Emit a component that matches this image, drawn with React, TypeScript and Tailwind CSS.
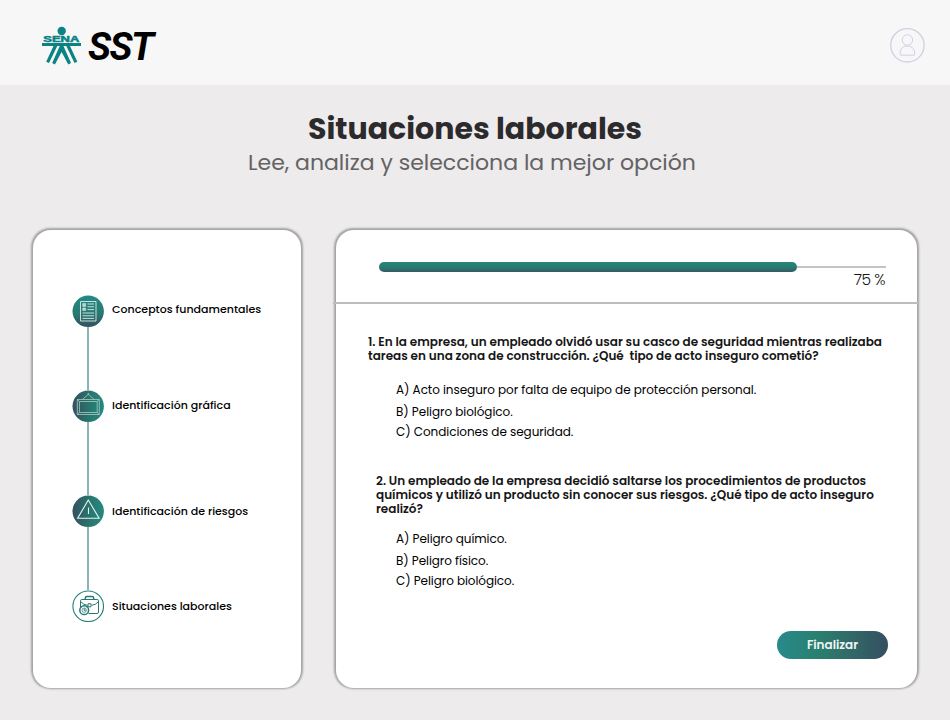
import React from "react";

const steps = [
  { label: "Conceptos fundamentales", icon: "doc", gap: "h-[63px]", shift: "mt-[-4px]" },
  { label: "Identificación gráfica", icon: "frame", gap: "h-[73px]", shift: "mt-[-2px]" },
  { label: "Identificación de riesgos", icon: "warn", gap: "h-[63px]", shift: "mt-0" },
  { label: "Situaciones laborales", icon: "case", gap: "", shift: "mt-0" },
];

function StepIcon({ kind }: { kind: string }) {
  const id = "g-" + kind;
  const vertical = kind === "doc";
  return (
    <svg viewBox="0 0 32 32" className="block size-8 shrink-0" fill="none">
      <defs>
        <linearGradient id={id} x1="0" y1="0" x2={vertical ? "0" : "1"} y2={vertical ? "1" : "0"}>
          <stop offset="0" stopColor={vertical ? "#248987" : "#34505f"} />
          <stop offset=".6" stopColor="#27796f" />
          <stop offset="1" stopColor={vertical ? "#344f61" : "#268783"} />
        </linearGradient>
      </defs>
      {kind === "case" ? (
        <circle cx="16.2" cy="16.3" r="15.3" fill="#fff" stroke="#287d7d" strokeWidth="1.1" />
      ) : (
        <circle cx="16.2" cy="16.3" r="15.7" fill={`url(#${id})`} />
      )}
      {kind === "doc" && (
        <g stroke="#dcebea" strokeWidth=".9">
          <path d="M8.5 6.5h15.5v19.5H8.5z" />
          <path d="M10.7 8.5h3v3h-3zM10.7 13h3v2.5h-3z" fill="#b7d5d3" strokeWidth=".5" />
          <path d="M15.5 9h6.5M15.5 11.8h6.5M15.5 14.6h6.5M10.5 18h11.5M10.5 20.8h11.5M10.5 23.4h11.5" />
        </g>
      )}
      {kind === "frame" && (
        <g stroke="#a8cac7" strokeWidth=".8">
          <path d="M5.3 9.5h22v15h-22zM7.4 11.5h17.8v11H7.4zM5.3 9.5l2.1 2M27.3 9.5l-2.1 2M5.3 24.5l2.1-2M27.3 24.5l-2.1-2M10.5 9.5l5.8-5.2 5.8 5.2" />
          <circle cx="16.3" cy="4" r=".5" />
        </g>
      )}
      {kind === "warn" && (
        <g stroke="#e9f3f3" strokeWidth="1.1">
          <path d="M16.3 5L5.6 23.3h21.5z" />
          <path d="M16.5 12.5v6.5" />
        </g>
      )}
      {kind === "case" && (
        <g stroke="#287875" strokeWidth="1">
          <path d="M8.5 17v-6.2q0-1.3 1.3-1.3h15.4q1.3 0 1.3 1.3v11.2q0 1.5-1.5 1.5H16.5" />
          <path d="M13.3 9.2V8.2q0-1.7 1.7-1.7h5q1.7 0 1.7 1.7v1" strokeWidth="1.5" />
          <path d="M8.5 11.5q3 3.5 7 3.8M19.5 15.3q4.5-.3 7-3.8M16 13.8h3v3h-3z" />
          <circle cx="12.2" cy="20.2" r="4.4" fill="#fff" strokeWidth="1.5" />
          <circle cx="12.2" cy="20.2" r="2.2" strokeWidth=".7" />
          <path d="M12.2 18.4v1.9h1.6M8.2 16.2l1.3 1.3M16.2 16.2l-1.3 1.3" />
        </g>
      )}
    </svg>
  );
}

function SenaLogo() {
  return (
    <svg viewBox="0 0 40 40" className="block h-10 w-10" fill="#0b8283">
      <circle cx="20.7" cy="5" r="4.2" />
      <text x="2.3" y="16" fontFamily="Liberation Sans" fontWeight="700" fontSize="8.6" stroke="#0b8283" strokeWidth=".5" textLength="36" lengthAdjust="spacingAndGlyphs">SENA</text>
      <path d="M1 17.1H40v2.9H29l7.3 15.8-2.8 1.3-8.2-17.1h-9L8 37.1l-2.8-1.3 7.3-15.8H1z" />
      <path d="M19.2 19h2.8l8 18-2.7 1.4-6.7-12.4-6.7 12.4-2.7-1.4z" />
    </svg>
  );
}

function Line({ children, className }: { children: React.ReactNode; className: string }) {
  return <p className={"w-max whitespace-pre " + className}>{children}</p>;
}

export default function App() {
  return (
    <div className="h-[720px] w-[950px] overflow-hidden bg-[#edebec] font-['Poppins','Inter',sans-serif] text-[#161616]">
      <header className="flex h-[85px] items-start justify-between bg-[#f7f7f7] pr-[25px] pl-[41px]">
        <div className="flex pt-[26px]">
          <SenaLogo />
          <span className="mt-px ml-[7px] w-max font-['Roboto',sans-serif] text-[38.5px] leading-[40px] font-bold italic tracking-[-1.5px] text-black">SST</span>
        </div>
        <svg viewBox="0 0 36 36" className="mt-[27px] block size-9" fill="none" stroke="#d4cee6">
          <circle cx="18.4" cy="18.3" r="16.7" strokeWidth="1.3" />
          <circle cx="18.4" cy="13" r="5.2" />
          <path d="M11.6 28.2q-1-1.2-.2-4.2 1.5-5 7-5t7 5q.8 3-.2 4.2z" strokeLinejoin="round" />
        </svg>
      </header>

      <section className="h-[145px] pt-[25px]">
        <h1 className="ml-[308px] w-max text-[30px] leading-[38px] font-bold text-[#2c2a2c]">Situaciones laborales</h1>
        <p className="mt-[-2px] ml-[248px] w-max text-[22px] leading-[34px] text-[#646264]">Lee, analiza y selecciona la mejor opción</p>
      </section>

      <main className="flex items-start gap-[35px] pl-[33px]">
        <nav className="h-[458px] w-[268px] rounded-[18px] bg-white pt-[65px] pl-[39px] shadow-[0_-0.5px_2px_1.2px_#a4a4a4]">
          {steps.map((s) => (
            <div key={s.icon}>
              <div className="flex h-8 items-center gap-[8px]">
                <StepIcon kind={s.icon} />
                <Line className={"text-[11px] leading-[16px] font-medium tracking-[0.02px] text-black " + s.shift}>{s.label}</Line>
              </div>
              <div className={"ml-[15px] w-[2px] bg-[#8ab5b5] " + s.gap} />
            </div>
          ))}
        </nav>

        <article className="h-[458px] w-[581px] rounded-[18px] bg-white shadow-[0_-0.5px_2px_1.2px_#a4a4a4]">
          <div className="mr-[-1px] ml-[-3px] h-[74px] border-b-2 border-[#bdbdbd] pt-[32px] pr-[32px] pl-[46px]">
            <div className="flex h-[10px] items-center">
              <div className="h-[10px] w-[418px] rounded-full bg-linear-to-b from-[#29847c] via-[#257d70] to-[#365766]" />
              <div className="h-[2px] flex-1 bg-[#c4c4c4]" />
            </div>
            <p className="mt-[-2px] mr-px text-right text-[15.5px] leading-[20px] font-light tracking-[-0.5px]">75 %</p>
          </div>
          <section className="pt-[31px] pl-[32px]">
            <Line className="text-[12px] leading-[14px] font-semibold">{"1. En la empresa, un empleado olvidó usar su casco de seguridad mientras realizaba\ntareas en una zona de construcción. ¿Qué  tipo de acto inseguro cometió?"}</Line>
            <div className="pt-[16px] pl-[28px] text-[12px] tracking-[-0.05px] text-black">
              <Line className="leading-[22px]">A) Acto inseguro por falta de equipo de protección personal.</Line>
              <Line className="leading-[22px]">B) Peligro biológico.</Line>
              <Line className="leading-[18px]">C) Condiciones de seguridad.</Line>
            </div>
          </section>
          <section className="pt-[33px] pl-[40px]">
            <Line className="text-[12px] leading-[14px] font-semibold">{"2. Un empleado de la empresa decidió saltarse los procedimientos de productos\nquímicos y utilizó un producto sin conocer sus riesgos. ¿Qué tipo de acto inseguro\nrealizó?"}</Line>
            <div className="pt-[12px] pl-[20px] text-[12px] tracking-[-0.07px] text-black">
              <Line className="leading-[22px]">A) Peligro químico.</Line>
              <Line className="leading-[22px]">B) Peligro físico.</Line>
              <Line className="leading-[18px]">C) Peligro biológico.</Line>
            </div>
          </section>
          <button className="mt-[41px] ml-[441px] block h-[28px] w-[111px] rounded-full bg-linear-to-r from-[#29898c] via-[#28816f] via-35% to-[#344f61] text-[12px] font-semibold text-[#eef5f4]">Finalizar</button>
        </article>
      </main>
    </div>
  );
}
